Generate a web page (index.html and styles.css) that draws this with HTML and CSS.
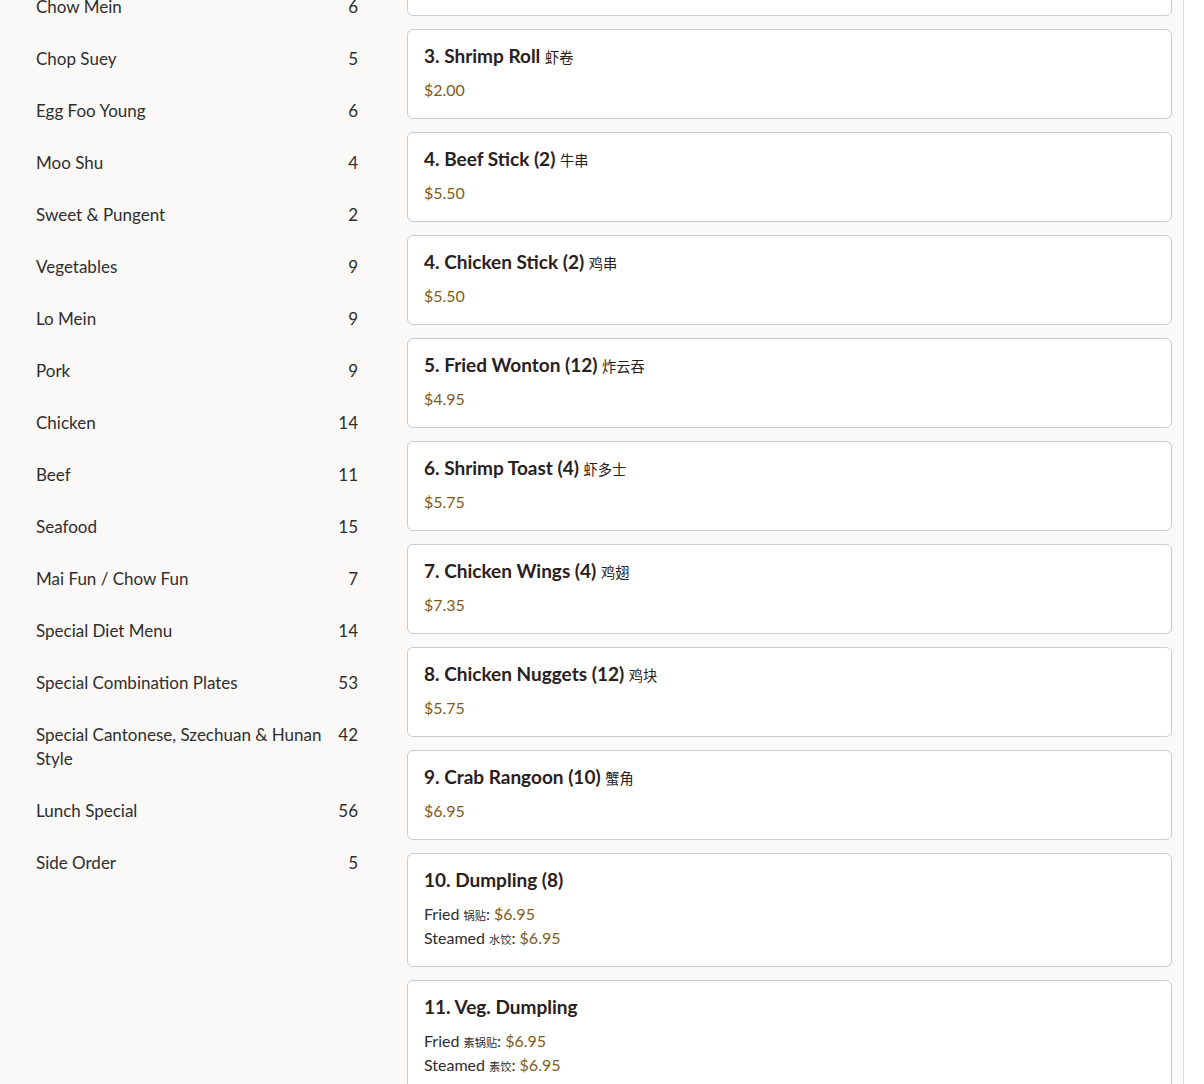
FILE: index.html
```html
<!DOCTYPE html>
<html lang="en">
<head>
<meta charset="utf-8">
<title>Menu</title>
<link rel="stylesheet" href="styles.css">
</head>
<body>
<div class="app">
  <nav class="sidebar">
    <ul class="cat-list">
      <li class="cat"><span class="cat-name">Appetizers</span><span class="cat-count">14</span></li>
      <li class="cat"><span class="cat-name">Soup</span><span class="cat-count">10</span></li>
      <li class="cat"><span class="cat-name">Fried Rice</span><span class="cat-count">10</span></li>
      <li class="cat"><span class="cat-name">Chow Mein</span><span class="cat-count">6</span></li>
      <li class="cat"><span class="cat-name">Chop Suey</span><span class="cat-count">5</span></li>
      <li class="cat"><span class="cat-name">Egg Foo Young</span><span class="cat-count">6</span></li>
      <li class="cat"><span class="cat-name">Moo Shu</span><span class="cat-count">4</span></li>
      <li class="cat"><span class="cat-name">Sweet &amp; Pungent</span><span class="cat-count">2</span></li>
      <li class="cat"><span class="cat-name">Vegetables</span><span class="cat-count">9</span></li>
      <li class="cat"><span class="cat-name">Lo Mein</span><span class="cat-count">9</span></li>
      <li class="cat"><span class="cat-name">Pork</span><span class="cat-count">9</span></li>
      <li class="cat"><span class="cat-name">Chicken</span><span class="cat-count">14</span></li>
      <li class="cat"><span class="cat-name">Beef</span><span class="cat-count">11</span></li>
      <li class="cat"><span class="cat-name">Seafood</span><span class="cat-count">15</span></li>
      <li class="cat"><span class="cat-name">Mai Fun / Chow Fun</span><span class="cat-count">7</span></li>
      <li class="cat"><span class="cat-name">Special Diet Menu</span><span class="cat-count">14</span></li>
      <li class="cat"><span class="cat-name">Special Combination Plates</span><span class="cat-count">53</span></li>
      <li class="cat"><span class="cat-name">Special Cantonese, Szechuan &amp; Hunan Style</span><span class="cat-count">42</span></li>
      <li class="cat"><span class="cat-name">Lunch Special</span><span class="cat-count">56</span></li>
      <li class="cat"><span class="cat-name">Side Order</span><span class="cat-count">5</span></li>
    </ul>
  </nav>
  <main class="menu">
    <div class="card">
      <h3 class="item-title">1. Egg Roll <span class="zh">蛋卷</span></h3>
      <div class="price">$1.95</div>
    </div>
    <div class="card">
      <h3 class="item-title">2. Spring Roll <span class="zh">春卷</span></h3>
      <div class="price">$1.95</div>
    </div>
    <div class="card">
      <h3 class="item-title">3. Shrimp Roll <span class="zh">虾卷</span></h3>
      <div class="price">$2.00</div>
    </div>
    <div class="card">
      <h3 class="item-title">4. Beef Stick (2) <span class="zh">牛串</span></h3>
      <div class="price">$5.50</div>
    </div>
    <div class="card">
      <h3 class="item-title">4. Chicken Stick (2) <span class="zh">鸡串</span></h3>
      <div class="price">$5.50</div>
    </div>
    <div class="card">
      <h3 class="item-title">5. Fried Wonton (12) <span class="zh">炸云吞</span></h3>
      <div class="price">$4.95</div>
    </div>
    <div class="card">
      <h3 class="item-title">6. Shrimp Toast (4) <span class="zh">虾多士</span></h3>
      <div class="price">$5.75</div>
    </div>
    <div class="card">
      <h3 class="item-title">7. Chicken Wings (4) <span class="zh">鸡翅</span></h3>
      <div class="price">$7.35</div>
    </div>
    <div class="card">
      <h3 class="item-title">8. Chicken Nuggets (12) <span class="zh">鸡块</span></h3>
      <div class="price">$5.75</div>
    </div>
    <div class="card">
      <h3 class="item-title">9. Crab Rangoon (10) <span class="zh">蟹角</span></h3>
      <div class="price">$6.95</div>
    </div>
    <div class="card">
      <h3 class="item-title">10. Dumpling (8)</h3>
      <div class="options">
        <div class="opt">Fried <span class="zh">锅贴</span>: <span class="opt-price">$6.95</span></div>
        <div class="opt">Steamed <span class="zh">水饺</span>: <span class="opt-price">$6.95</span></div>
      </div>
    </div>
    <div class="card">
      <h3 class="item-title">11. Veg. Dumpling</h3>
      <div class="options">
        <div class="opt">Fried <span class="zh">素锅贴</span>: <span class="opt-price">$6.95</span></div>
        <div class="opt">Steamed <span class="zh">素饺</span>: <span class="opt-price">$6.95</span></div>
      </div>
    </div>
  </main>
  <aside class="side-edge"></aside>
</div>
</body>
</html>
```
FILE: styles.css
```css
* { box-sizing: border-box; }
html, body { margin: 0; padding: 0; }
body {
  background: #faf9f7;
  font-family: "Lato", "Noto Sans CJK SC", sans-serif;
  color: #2e2e2e;
}
.app {
  display: flex;
  align-items: flex-start;
  margin-top: -200px;
  min-height: 1400px;
}
.sidebar {
  width: 394px;
  flex: 0 0 394px;
  padding: 24px 36px 0 36px;
}
.cat-list { list-style: none; margin: 0; padding: 0; }
.cat {
  display: flex;
  justify-content: space-between;
  align-items: flex-start;
  gap: 8px;
  padding: 15px 0 13px 0;
  font-size: 17px;
  line-height: 24px;
  color: #2e2e2e;
}
.cat-count { text-align: right; flex: 0 0 auto; }
.menu {
  flex: 1 1 auto;
  align-self: stretch;
  padding: 23px 11px 0 13px;
  border-right: 1px solid #dedcd8;
  display: flex;
  flex-direction: column;
  gap: 13px;
}
.side-edge {
  flex: 0 0 20px;
  align-self: stretch;
  background: #ffffff;
}
.card {
  background: #ffffff;
  border: 1px solid #cdcbc8;
  border-radius: 6px;
  padding: 16px;
}
.item-title {
  margin: 0 0 12px 0;
  font-size: 19px;
  line-height: 20px;
  height: 20px;
  font-weight: 700;
  color: #2a2020;
}
.zh {
  font-size: 0.75em;
  line-height: 1;
  font-weight: 400;
}
.price, .opt-price { color: #7d5c1a; }
.price { font-size: 16px; line-height: 24px; height: 24px; }
.opt { font-size: 16px; line-height: 24px; height: 24px; color: #2e2e2e; }
.opt .zh { font-size: 0.7em; }
```
